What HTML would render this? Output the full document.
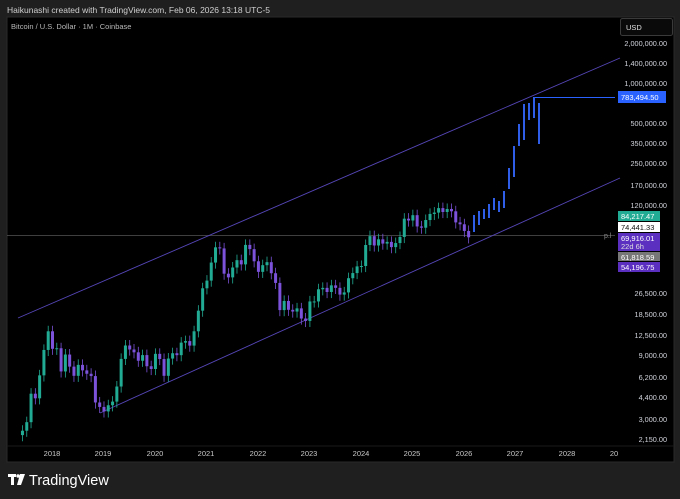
<!DOCTYPE html><html><head><meta charset="utf-8"><style>
body{margin:0;width:680px;height:499px;background:#1f1f1f;overflow:hidden;font-family:"Liberation Sans",sans-serif}
svg{position:absolute;left:0;top:0}
</style></head><body>
<svg width="680" height="499" viewBox="0 0 680 499" id="s" font-family="Liberation Sans, sans-serif">
<text x="7" y="13" fill="#d0d0d0" font-size="8.5">Haikunashi created with TradingView.com, Feb 06, 2026 13:18 UTC-5</text>
<rect x="7" y="17" width="667" height="445" fill="#000" stroke="#2a2a2a"/>
<text x="11" y="29" fill="#b8b8b8" font-size="7.5">Bitcoin / U.S. Dollar · 1M · Coinbase</text>
<rect x="620.5" y="18.5" width="52" height="17" rx="2" fill="#0a0a0a" stroke="#3a3a3a"/>
<text x="626" y="30" fill="#e0e0e0" font-size="7.5">USD</text>
<line x1="7" y1="446" x2="674" y2="446" stroke="#1a1a1a"/>
<line x1="7" y1="235.5" x2="615" y2="235.5" stroke="#555" stroke-width="0.8"/>
<text x="604" y="238" fill="#888" font-size="7">p.l</text>
<line x1="18" y1="318" x2="620" y2="58" stroke="#5546b8" stroke-width="0.9"/>
<line x1="100" y1="413" x2="620" y2="178" stroke="#5546b8" stroke-width="0.9"/>
<line x1="533" y1="97.5" x2="615" y2="97.5" stroke="#2962ff" stroke-width="0.9"/>
<g id="c"></g>
<g fill="#d1d4dc" font-size="7.3" text-anchor="end">
<text x="667" y="46">2,000,000.00</text><text x="667" y="66">1,400,000.00</text><text x="667" y="86">1,000,000.00</text>
<text x="667" y="126">500,000.00</text><text x="667" y="146">350,000.00</text><text x="667" y="166">250,000.00</text>
<text x="667" y="188">170,000.00</text><text x="667" y="208">120,000.00</text><text x="667" y="296">26,500.00</text>
<text x="667" y="317">18,500.00</text><text x="667" y="338">12,500.00</text><text x="667" y="358">9,000.00</text>
<text x="667" y="380">6,200.00</text><text x="667" y="400">4,400.00</text><text x="667" y="422">3,000.00</text>
<text x="667" y="442">2,150.00</text>
</g>
<rect x="618" y="91" width="48" height="12" fill="#2962ff"/><text x="621" y="100" fill="#fff" font-size="7.5">783,494.50</text>
<rect x="618" y="211" width="42" height="10" fill="#22ab94"/><text x="621" y="219" fill="#fff" font-size="7.5">84,217.47</text>
<rect x="618" y="222" width="42" height="10" fill="#fff"/><text x="621" y="230" fill="#111" font-size="7.5">74,441.33</text>
<rect x="618" y="233" width="42" height="18" fill="#5b2fc0"/><text x="621" y="241" fill="#fff" font-size="7.5">69,916.01</text><text x="621" y="249" fill="#ddd" font-size="7.5">22d 6h</text>
<rect x="618" y="252" width="42" height="9" fill="#777"/><text x="621" y="260" fill="#fff" font-size="7.5">61,818.59</text>
<rect x="618" y="262" width="42" height="10" fill="#5b2fc0"/><text x="621" y="270" fill="#fff" font-size="7.5">54,196.75</text>
<g fill="#c8c8c8" font-size="7.5" text-anchor="middle">
<text x="52" y="456">2018</text><text x="103" y="456">2019</text><text x="155" y="456">2020</text><text x="206" y="456">2021</text>
<text x="258" y="456">2022</text><text x="309" y="456">2023</text><text x="361" y="456">2024</text><text x="412" y="456">2025</text>
<text x="464" y="456">2026</text><text x="515" y="456">2027</text><text x="567" y="456">2028</text><text x="614" y="456">20</text>
</g>
<g fill="#fff"><rect x="8" y="474" width="8" height="3"/><rect x="11" y="474" width="3" height="11"/><circle cx="18" cy="476" r="1.7"/><path d="M20 474h5l-4 11h-4z"/></g>
<text x="29" y="485" fill="#fff" font-size="14.5">TradingView</text>
</svg>
<script>
var c=[2480,2875,4700,4340,6450,10000,13800,10200,10300,6900,9240,7500,6400,7730,7030,6630,6370,4040,3740,3460,3850,4100,5320,8570,10800,10080,9600,8300,9150,7550,7200,9350,8550,6400,8620,9450,9140,11350,11650,10780,13800,19700,29000,33100,45200,58800,57700,37300,35000,41500,47100,43800,61300,57000,46200,38500,43200,45500,37600,31800,19900,23300,20000,19400,20500,17200,16500,23100,23100,28500,29200,27200,30500,29200,26000,27000,34500,37700,42300,42600,61200,71300,60700,67500,62700,64600,59000,63300,70300,96400,93400,102400,84300,82500,94200,104600,107100,115700,108200,114000,109500,90400,87500,78000,69900];
function Y(p){return 43+133.4*(6.301-Math.log10(p));}
var h='',o=2300;
for(var i=0;i<c.length;i++){var x=52+(i-7)*4.29,cl=c[i],up=cl>=o,col=up?'#22ab94':'#7b52d9';
var hi=Math.max(o,cl)*1.1,lo=Math.min(o,cl)*0.9;var y1=Y(Math.max(o,cl)),y2=Y(Math.min(o,cl));
h+='<line x1="'+(x+0.5)+'" x2="'+(x+0.5)+'" y1="'+Y(hi)+'" y2="'+Y(lo)+'" stroke="'+col+'" stroke-width="0.8"/>';
h+='<rect x="'+(x-1)+'" y="'+y1+'" width="3" height="'+Math.max(1,y2-y1)+'" fill="'+col+'"/>';o=cl;}
var b=[[473,215,232],[478,211,225],[483,209,219],[488,204,218],[493,198,210],[498,201,212],[503,191,208],[508,168,189],[513,146,177],[518,124,146],[523,104,140],[528,103,120],[533,97,118],[538,103,144]];
b.forEach(function(a){h+='<rect x="'+a[0]+'" y="'+a[1]+'" width="2" height="'+(a[2]-a[1])+'" fill="#2f5fe8"/>';});
document.getElementById('c').innerHTML=h;
</script>
</body></html>
